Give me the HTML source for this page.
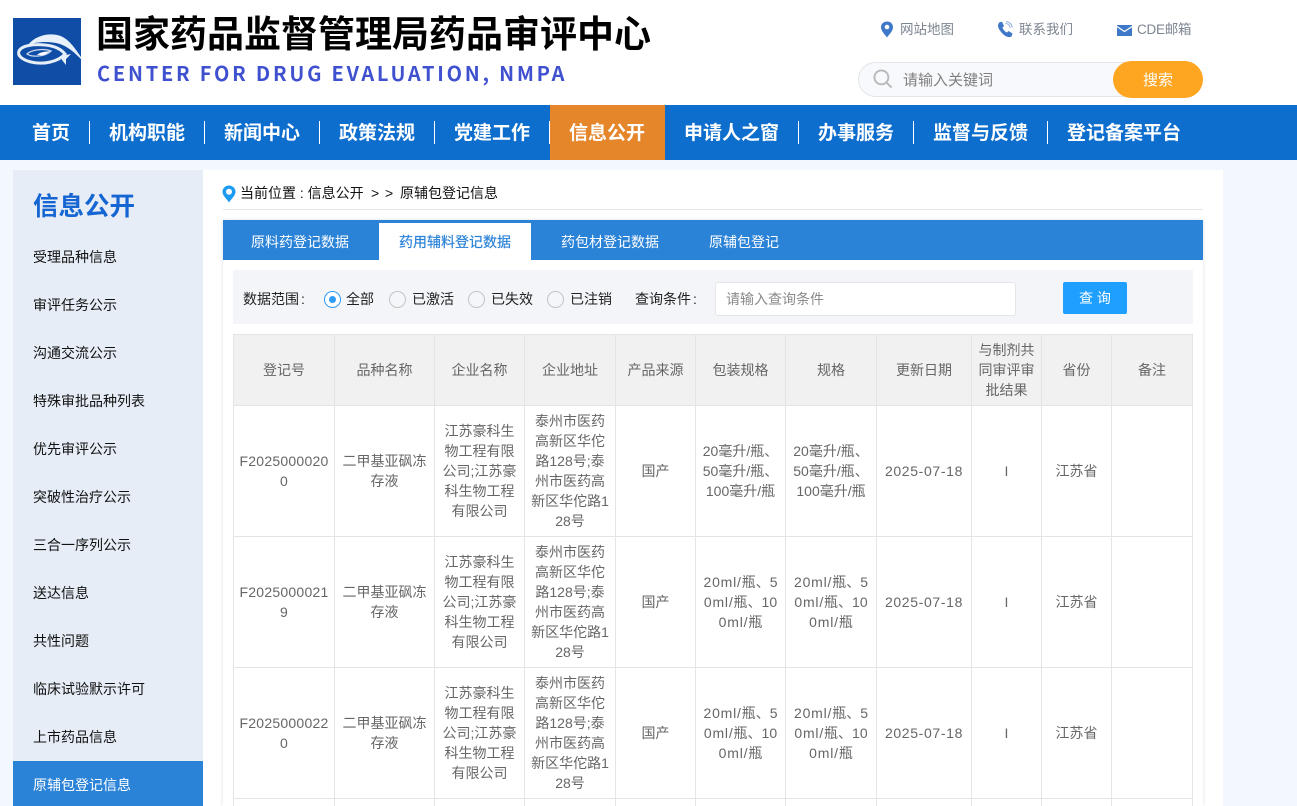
<!DOCTYPE html>
<html lang="zh-CN"><head><meta charset="utf-8"><title>原辅包登记信息</title>
<style>
*{box-sizing:border-box}
html,body{margin:0;padding:0;width:1297px;height:806px;overflow:hidden;background:#f3f7fe;font-family:"Liberation Sans","Noto Sans CJK SC",sans-serif;}
.a{position:absolute;white-space:nowrap}
#hd{position:absolute;left:0;top:0;width:1297px;height:105px;background:#fff}
#nav{position:absolute;left:0;top:105px;width:1297px;height:55px;background:#0d6ecd}
.n{position:absolute;top:0;line-height:57px;font-size:19px;font-weight:700;color:#fff;white-space:nowrap}
.s{position:absolute;top:16px;width:1px;height:23px;background:#fff}
#side{position:absolute;left:13px;top:170px;width:190px;height:636px;background:#e6edf6}
.m{position:absolute;left:20px;font-size:14px;line-height:20px;color:#111;white-space:nowrap}
#main{position:absolute;left:203px;top:170px;width:1020px;height:636px;background:#fff}
#tw{position:absolute;left:233px;top:334px;width:961px;height:472px;overflow:hidden}
table{border-collapse:collapse;table-layout:fixed;width:959px;font-size:14px;line-height:20px;color:#666}
td,th{border:1px solid #e3e4e6;text-align:center;vertical-align:middle;padding:0;white-space:nowrap;font-weight:400;overflow:hidden}
th{background:#f1f1f1;height:71px}
td{height:131px}
tr.z td{height:7px;border-bottom:0;line-height:0;font-size:0}
.d{letter-spacing:.24px}
.e{letter-spacing:.8px}
.t{position:absolute;top:0;height:40px;line-height:44px;font-size:14px;color:#fff;white-space:nowrap}
.r{position:absolute;top:291px;width:17px;height:17px;border:1.500px solid #c4c4c4;border-radius:50%;background:#f5f6f9}
.l{position:absolute;top:289px;line-height:20px;font-size:14px;color:#222;white-space:nowrap}
</style></head><body>
<div id="hd">
<svg class="a" style="left:13px;top:18px" width="72" height="67" viewBox="0 0 72 67">
<rect width="68" height="67" fill="#0f4da6"/>
<path d="M15 27C22 18 34 15 44 17C55 19 62 30 72 45C62 35 54 27 43 25C33 23 23 24 15 27Z" fill="#e8f0fa"/>
<path d="M52 36C45 44 30 47 18 44C10 42 4 38 6 33C9 27 22 26 32 27C42 28 48 31 52 36Z" fill="none" stroke="#e6eef8" stroke-width="3"/>
<path d="M14 36C18 32 30 30 38 33C33 38 20 40 14 36Z" fill="none" stroke="#c9d8ee" stroke-width="1.300"/>
<path d="M24 37C27 34 31 34 37 33L31 37Z" fill="#fff"/>
<path d="M48 38L58 36L53 41L53 47L49 42Z" fill="#e8f0fa"/>
</svg>
<div class="a" style="left:96px;top:14px;font-size:37px;line-height:42px;font-weight:700;color:#000">国家药品监督管理局药品审评中心</div>
<div class="a" style="left:97px;top:58px;font-size:20px;line-height:29px;font-weight:700;color:#3f51cf;letter-spacing:2.770px;font-family:'Noto Sans CJK SC',sans-serif">CENTER FOR DRUG EVALUATION, NMPA</div>

<svg class="a" style="left:880px;top:21px" width="14" height="17" viewBox="0 0 14 17"><path d="M7 0.500C3.500 0.500 1 3 1 6.200C1 10 5 13.500 7 16.500C9 13.500 13 10 13 6.200C13 3 10.500 0.500 7 0.500Z" fill="#3f78c9"/><circle cx="7" cy="6" r="2.300" fill="#fff"/></svg>
<div class="a" style="left:900px;top:20px;font-size:13.500px;line-height:20px;color:#7d8591">网站地图</div>
<svg class="a" style="left:997px;top:21px" width="17" height="17" viewBox="0 0 17 17"><path d="M2 1.500L5 .8L7 5L5.500 6.500C6 8.500 7.800 10.600 10 11.500L11.500 10L15.500 12.500L14.500 15.500C13 16.500 10 16.300 7 14C3.500 11 .8 7 1 4Z" fill="#3f78c9"/><path d="M8.500 2.500C11 2.500 13 4.500 13.200 7M9 .6C12.500.8 15 3.500 15.200 6.500" fill="none" stroke="#8fb0e0" stroke-width="1"/></svg>
<div class="a" style="left:1019px;top:20px;font-size:13.500px;line-height:20px;color:#7d8591">联系我们</div>
<svg class="a" style="left:1117px;top:25px" width="15" height="11" viewBox="0 0 15 11"><rect width="15" height="11" fill="#3f78c9"/><path d="M0 1.500L7.500 6.500L15 1.500" fill="none" stroke="#fff" stroke-width="1.200"/></svg>
<div class="a" style="left:1137px;top:20px;font-size:13.500px;line-height:20px;color:#7d8591;letter-spacing:-.25px">CDE邮箱</div>

<div class="a" style="left:858px;top:62px;width:290px;height:35px;background:#f8f9fd;border:1px solid #e3e5e9;border-radius:18px"></div>
<svg class="a" style="left:873px;top:69px" width="20" height="20" viewBox="0 0 21 21"><circle cx="8.800" cy="8.800" r="7.300" fill="none" stroke="#b9b9b9" stroke-width="2"/><path d="M14.500 14.500L19.500 19.500" stroke="#b9b9b9" stroke-width="2"/></svg>
<div class="a" style="left:903px;top:70px;font-size:15px;line-height:21px;color:#7f7f7f">请输入关键词</div>
<div class="a" style="left:1113px;top:61px;width:90px;height:37px;border-radius:19px;background:#fea521;color:#fff;font-size:15px;line-height:39px;text-align:center">搜索</div>
</div>

<div id="nav">
<div class="n" style="left:32px">首页</div><div class="s" style="left:89px"></div>
<div class="n" style="left:109px">机构职能</div><div class="s" style="left:204px"></div>
<div class="n" style="left:224px">新闻中心</div><div class="s" style="left:319px"></div>
<div class="n" style="left:339px">政策法规</div><div class="s" style="left:434px"></div>
<div class="n" style="left:454px">党建工作</div><div class="s" style="left:549px"></div>
<div style="position:absolute;left:550px;top:0;width:115px;height:55px;background:#e5862b"></div>
<div class="n" style="left:569px">信息公开</div>
<div class="n" style="left:684px">申请人之窗</div><div class="s" style="left:798px"></div>
<div class="n" style="left:818px">办事服务</div><div class="s" style="left:913px"></div>
<div class="n" style="left:933px">监督与反馈</div><div class="s" style="left:1047px"></div>
<div class="n" style="left:1067px">登记备案平台</div>
</div>

<div id="side">
<div class="a" style="left:20px;top:20px;font-size:25.500px;line-height:34px;font-weight:700;color:#1565d2">信息公开</div>
<div class="m" style="top:77px">受理品种信息</div>
<div class="m" style="top:125px">审评任务公示</div>
<div class="m" style="top:173px">沟通交流公示</div>
<div class="m" style="top:221px">特殊审批品种列表</div>
<div class="m" style="top:269px">优先审评公示</div>
<div class="m" style="top:317px">突破性治疗公示</div>
<div class="m" style="top:365px">三合一序列公示</div>
<div class="m" style="top:413px">送达信息</div>
<div class="m" style="top:461px">共性问题</div>
<div class="m" style="top:509px">临床试验默示许可</div>
<div class="m" style="top:557px">上市药品信息</div>
<div style="position:absolute;left:0;top:591px;width:190px;height:45px;background:#2b83d8"></div>
<div class="m" style="top:605px;color:#fff">原辅包登记信息</div>
</div>

<div id="main"></div>
<svg class="a" style="left:222px;top:185px" width="14" height="18" viewBox="0 0 14 18"><path d="M7 .5C3.300.5.500 3.300.500 6.800C.500 10.800 4.800 14 7 17.500C9.200 14 13.500 10.800 13.500 6.800C13.500 3.300 10.700.5 7 .5Z" fill="#1d9bf0"/><circle cx="7" cy="6.800" r="3" fill="#fff"/></svg>
<div class="a" style="left:240px;top:183px;font-size:14px;line-height:20px;color:#111">当前位置 : 信息公开</div>
<div class="a" style="left:371px;top:183px;font-size:14px;line-height:20px;color:#111">&gt;</div>
<div class="a" style="left:385px;top:183px;font-size:14px;line-height:20px;color:#111">&gt;</div>
<div class="a" style="left:400px;top:183px;font-size:14px;line-height:20px;color:#111">原辅包登记信息</div>
<div class="a" style="left:223px;top:209px;width:980px;height:1px;background:#e4e6ea"></div>

<div style="position:absolute;left:223px;top:220px;width:980px;height:586px;background:#fff;box-shadow:0 0 4px rgba(60,90,140,.18);clip-path:inset(-6px -6px 0 -6px)">
<div style="position:absolute;left:0;top:0;width:980px;height:40px;background:#2b83d8"></div>
<div style="position:absolute;left:156px;top:3px;width:152px;height:37px;background:#fff"></div>
<div class="t" style="left:28px">原料药登记数据</div>
<div class="t" style="left:176px;color:#2b83d8;font-weight:400;-webkit-text-stroke:.2px #2b83d8">药用辅料登记数据</div>
<div class="t" style="left:338px">药包材登记数据</div>
<div class="t" style="left:486px">原辅包登记</div>
</div>

<div class="a" style="left:233px;top:270px;width:960px;height:54px;background:#f4f5f9"></div>
<div class="l" style="left:243px">数据范围<span style="margin-left:2px">:</span></div>
<div class="r" style="left:324px;border-color:#2e9bf5;background:#fff"></div>
<div class="a" style="left:329px;top:296px;width:7px;height:7px;border-radius:50%;background:#2e9bf5"></div>
<div class="l" style="left:346px">全部</div>
<div class="r" style="left:389px"></div><div class="l" style="left:412px">已激活</div>
<div class="r" style="left:468px"></div><div class="l" style="left:491px">已失效</div>
<div class="r" style="left:547px"></div><div class="l" style="left:570px">已注销</div>
<div class="l" style="left:635px">查询条件<span style="margin-left:2px">:</span></div>
<div class="a" style="left:715px;top:282px;width:301px;height:34px;background:#fff;border:1px solid #e4e6ea;border-radius:3px;padding-left:10px;font-size:14px;line-height:33px;color:#8a8a8a">请输入查询条件</div>
<div class="a" style="left:1063px;top:282px;width:64px;height:32px;background:#1f9fff;border-radius:2px;color:#fff;font-size:14px;line-height:32px;text-align:center">查 询</div>

<div id="tw">
<table>
<colgroup><col style="width:101px"><col style="width:100px"><col style="width:90px"><col style="width:91px"><col style="width:80px"><col style="width:90px"><col style="width:91px"><col style="width:95px"><col style="width:70px"><col style="width:70px"><col style="width:81px"></colgroup>
<tr><th>登记号</th><th>品种名称</th><th>企业名称</th><th>企业地址</th><th>产品来源</th><th>包装规格</th><th>规格</th><th>更新日期</th><th>与制剂共<br>同审评审<br>批结果</th><th>省份</th><th>备注</th></tr>
<tr><td class="d">F2025000020<br>0</td><td>二甲基亚砜冻<br>存液</td><td>江苏豪科生<br>物工程有限<br>公司;江苏豪<br>科生物工程<br>有限公司</td><td>泰州市医药<br>高新区华佗<br>路128号;泰<br>州市医药高<br>新区华佗路1<br>28号</td><td>国产</td><td>20毫升/瓶、<br>50毫升/瓶、<br>100毫升/瓶</td><td>20毫升/瓶、<br>50毫升/瓶、<br>100毫升/瓶</td><td><span style="letter-spacing:.65px">2025-07-18</span></td><td>I</td><td>江苏省</td><td></td></tr>
<tr><td class="d">F2025000021<br>9</td><td>二甲基亚砜冻<br>存液</td><td>江苏豪科生<br>物工程有限<br>公司;江苏豪<br>科生物工程<br>有限公司</td><td>泰州市医药<br>高新区华佗<br>路128号;泰<br>州市医药高<br>新区华佗路1<br>28号</td><td>国产</td><td><span class="e">20ml/</span>瓶、5<br><span class="e">0ml/</span>瓶、10<br><span class="e">0ml/</span>瓶</td><td><span class="e">20ml/</span>瓶、5<br><span class="e">0ml/</span>瓶、10<br><span class="e">0ml/</span>瓶</td><td><span style="letter-spacing:.65px">2025-07-18</span></td><td>I</td><td>江苏省</td><td></td></tr>
<tr><td class="d">F2025000022<br>0</td><td>二甲基亚砜冻<br>存液</td><td>江苏豪科生<br>物工程有限<br>公司;江苏豪<br>科生物工程<br>有限公司</td><td>泰州市医药<br>高新区华佗<br>路128号;泰<br>州市医药高<br>新区华佗路1<br>28号</td><td>国产</td><td><span class="e">20ml/</span>瓶、5<br><span class="e">0ml/</span>瓶、10<br><span class="e">0ml/</span>瓶</td><td><span class="e">20ml/</span>瓶、5<br><span class="e">0ml/</span>瓶、10<br><span class="e">0ml/</span>瓶</td><td><span style="letter-spacing:.65px">2025-07-18</span></td><td>I</td><td>江苏省</td><td></td></tr>
<tr class="z"><td></td><td></td><td></td><td></td><td></td><td></td><td></td><td></td><td></td><td></td><td></td></tr>
</table>
</div>
</body></html>
